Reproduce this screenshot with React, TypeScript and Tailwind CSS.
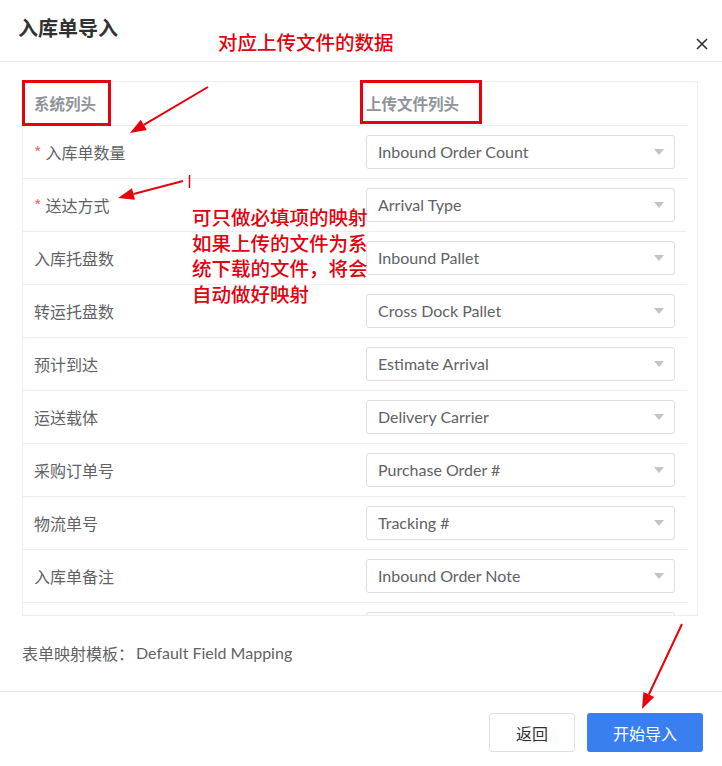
import React from "react";

const rows = [
  { label: "入库单数量", value: "Inbound Order Count", required: true },
  { label: "送达方式", value: "Arrival Type", required: true },
  { label: "入库托盘数", value: "Inbound Pallet" },
  { label: "转运托盘数", value: "Cross Dock Pallet" },
  { label: "预计到达", value: "Estimate Arrival" },
  { label: "运送载体", value: "Delivery Carrier" },
  { label: "采购订单号", value: "Purchase Order #" },
  { label: "物流单号", value: "Tracking #" },
  { label: "入库单备注", value: "Inbound Order Note" },
  { label: "", value: "" },
];

const cjk = "font-['Noto_Sans_CJK_SC',sans-serif]";
const latin = "font-['Lato','Noto_Sans_CJK_SC',sans-serif]";

const SelectBox = ({ value }: { value: string }) => (
  <div className="flex h-[34px] w-[309px] items-center justify-between rounded-[3px] border border-[#dcdfe6] bg-white pl-[11px] pr-[10px]">
    <span className={`${latin} text-[16px] text-[#606266]`}>{value}</span>
    <svg width="10" height="6" viewBox="0 0 10 6">
      <polygon points="0,0 10,0 5,6" fill="#c0c4cc" />
    </svg>
  </div>
);

const Arrow = ({ x1, y1, x2, y2 }: { x1: number; y1: number; x2: number; y2: number }) => {
  const a = Math.atan2(y2 - y1, x2 - x1);
  const len = 16;
  const w = 6;
  const bx = x2 - len * Math.cos(a);
  const by = y2 - len * Math.sin(a);
  const px = -Math.sin(a) * w;
  const py = Math.cos(a) * w;
  return (
    <g>
      <line x1={x1} y1={y1} x2={bx} y2={by} stroke="#e8000b" strokeWidth="2" />
      <polygon
        points={`${x2},${y2} ${bx + px},${by + py} ${bx - px},${by - py}`}
        fill="#e8000b"
      />
    </g>
  );
};

export default function App() {
  return (
    <div className={`relative h-[766px] w-[722px] overflow-hidden bg-white ${cjk}`}>
      {/* Header */}
      <div className="flex h-[62px] items-start justify-between border-b border-[#e4e7ed] pl-[18px] pr-[14px]">
        <div className="pt-[14px] text-[20px] font-bold leading-[28px] text-[#303133]">入库单导入</div>
        <svg className="mt-[38px]" width="12" height="12" viewBox="0 0 12 12">
          <path d="M1 1 L11 11 M11 1 L1 11" stroke="#303133" strokeWidth="1.6" />
        </svg>
      </div>

      {/* Body */}
      <div className="px-[22px] pt-[19px]">
        <div className="h-[535px] w-[676px] overflow-hidden border border-[#ebeef5]">
          <div className="w-[664px]">
            <div className="grid h-[44px] grid-cols-[332px_332px] items-center border-b border-[#ebeef5] text-[15.5px] font-bold text-[#909399]">
              <div className="pl-[11px]">系统列头</div>
              <div className="pl-[11px]">上传文件列头</div>
            </div>
            {rows.map((r, i) => (
              <div
                key={i}
                className="grid h-[53px] grid-cols-[332px_332px] items-center border-b border-[#ebeef5]"
              >
                <div className="pl-[11px] text-[16px] text-[#606266]">
                  {r.required && <span className="mr-[4px] text-[#f56c6c]">*</span>}
                  {r.label}
                </div>
                <div className="pl-[11px]">
                  <SelectBox value={r.value} />
                </div>
              </div>
            ))}
          </div>
        </div>
        <div className="mt-[26px] flex h-[22px] items-center text-[16px] text-[#606266]">
          <span>表单映射模板：</span>
          <span className={`${latin} ml-[2px]`}>Default Field Mapping</span>
        </div>
      </div>

      {/* Footer */}
      <div className="mt-[27px] flex justify-end gap-[12px] border-t border-[#e4e7ed] pr-[19px] pt-[21px]">
        <button className="h-[39px] w-[86px] rounded-[3px] border border-[#dcdfe6] bg-white text-[16px] text-[#303133]">
          返回
        </button>
        <button className="h-[39px] w-[116px] rounded-[3px] bg-[#3a7ff0] text-[16px] text-white">
          开始导入
        </button>
      </div>

      {/* Annotations */}
      <div className="absolute left-[218px] top-[29px] text-[19.5px] font-medium leading-[26px] text-[#e3000f]">
        对应上传文件的数据
      </div>
      <div className="absolute left-[22px] top-[80px] h-[46px] w-[89px] border-[3px] border-[#e8000b]" />
      <div className="absolute left-[360px] top-[80px] h-[44px] w-[122px] border-[3px] border-[#e8000b]" />
      <div className="absolute left-[192px] top-[204px] w-[180px] text-[19.5px] font-medium leading-[25.5px] text-[#e3000f]">
        可只做必填项的映射
        <br />
        如果上传的文件为系
        <br />
        统下载的文件，将会
        <br />
        自动做好映射
      </div>
      <svg className="pointer-events-none absolute left-0 top-0" width="722" height="766">
        <Arrow x1={208} y1={87} x2={130} y2={133} />
        <Arrow x1={183} y1={181} x2={118} y2={198} />
        <line x1={189.5} y1={175} x2={189.5} y2={188} stroke="#e8000b" strokeWidth="1.5" />
        <Arrow x1={682} y1={624} x2={642} y2={709} />
      </svg>
    </div>
  );
}
